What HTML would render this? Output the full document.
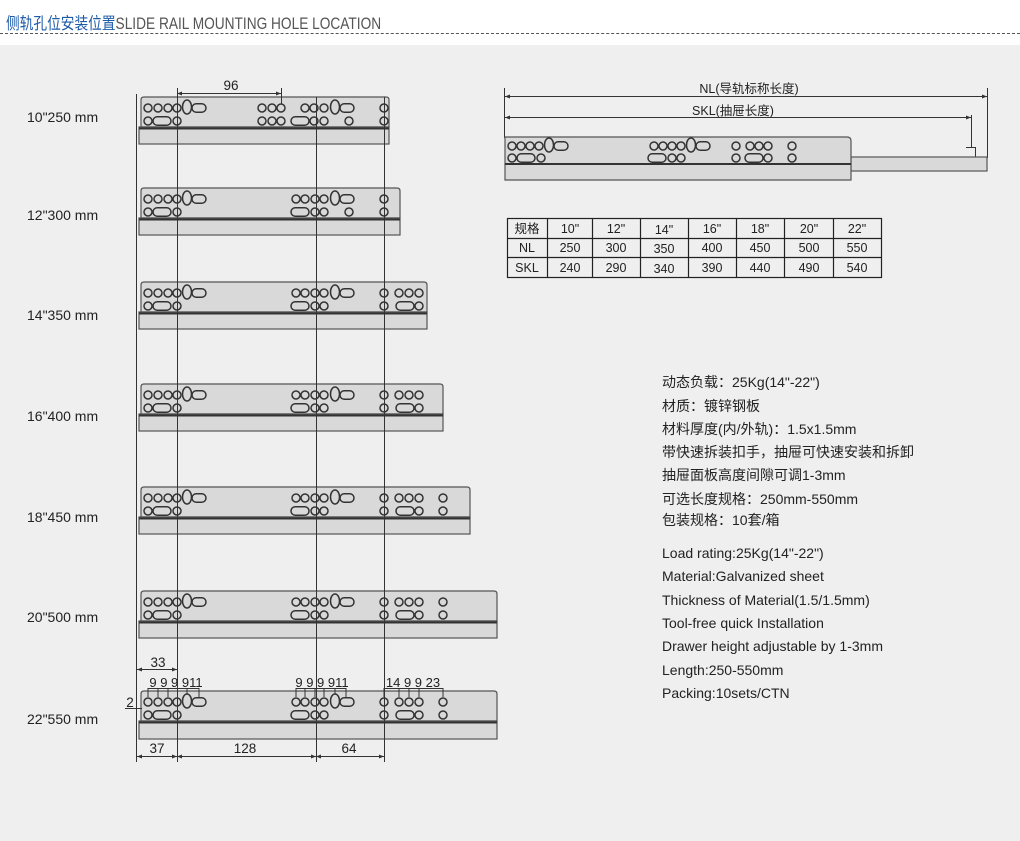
<!DOCTYPE html>
<html><head><meta charset="utf-8"><style>
body{margin:0;width:1020px;height:841px;background:#fff;overflow:hidden;font-family:"Liberation Sans","Noto Sans CJK SC",sans-serif;position:relative;color:#222}
.hd{position:absolute;left:6px;top:10px;font-size:16.5px;white-space:nowrap;transform:scaleX(0.83);transform-origin:0 0}
.hd .cn{color:#1d5aa8}.hd .en{color:#555}
.dash{position:absolute;left:0;top:33px;width:1020px;border-top:1px dashed #555}
.bg{position:absolute;left:0;top:45px;width:1020px;height:796px;background:#eeefee}
.t{position:absolute;white-space:nowrap;font-size:14px;color:#222}
.lb{position:absolute;left:27px;font-size:14px;color:#222;white-space:nowrap}
svg{position:absolute;left:0;top:0}
</style></head><body>
<div class="hd"><span class="cn">侧轨孔位安装位置</span><span class="en">SLIDE RAIL MOUNTING HOLE LOCATION</span></div>
<div class="dash"></div>
<div class="bg"></div>

<div class="lb" style="top:109px">10"250 mm</div>
<div class="lb" style="top:207px">12"300 mm</div>
<div class="lb" style="top:307px">14"350 mm</div>
<div class="lb" style="top:408px">16"400 mm</div>
<div class="lb" style="top:509px">18"450 mm</div>
<div class="lb" style="top:609px">20"500 mm</div>
<div class="lb" style="top:711px">22"550 mm</div>

<svg width="1020" height="841" viewBox="0 0 1020 841" font-family="Liberation Sans, sans-serif">
<defs>
<g id="c"><circle r="4" fill="none" stroke="#333" stroke-width="1.5"/></g>
<g id="tl"><ellipse rx="4.5" ry="7" fill="none" stroke="#333" stroke-width="1.5"/></g>
<g id="ov"><rect x="-7" y="-4.2" width="14" height="8.4" rx="4.2" fill="none" stroke="#333" stroke-width="1.5"/></g>
<g id="ovl"><rect x="-9" y="-4.2" width="18" height="8.4" rx="4.2" fill="none" stroke="#333" stroke-width="1.5"/></g>
<g id="L">
<use href="#c" x="148" y="108"/><use href="#c" x="158" y="108"/><use href="#c" x="168" y="108"/><use href="#c" x="177" y="108"/><use href="#tl" x="187" y="107"/><use href="#ov" x="199" y="108"/>
<use href="#c" x="148" y="121"/><use href="#ovl" x="162" y="121"/><use href="#c" x="177" y="121"/>
</g>
<g id="M">
<use href="#c" x="296" y="108"/><use href="#c" x="305" y="108"/><use href="#c" x="315" y="108"/><use href="#c" x="324" y="108"/><use href="#tl" x="335" y="107"/><use href="#ov" x="347" y="108"/>
<use href="#ovl" x="300" y="121"/><use href="#c" x="315" y="121"/><use href="#c" x="324" y="121"/>
</g>
<g id="R">
<use href="#c" x="384" y="108"/><use href="#c" x="399" y="108"/><use href="#c" x="409" y="108"/><use href="#c" x="419" y="108"/>
<use href="#c" x="384" y="121"/><use href="#ovl" x="405" y="121"/><use href="#c" x="419" y="121"/>
</g>
</defs>

<g fill="#d9d9d9" stroke="#555" stroke-width="1.2">
<g><path d="M141 127V100Q141 97 144 97H386Q389 97 389 100V127Z"/><rect x="139" y="127" width="250" height="17"/><line x1="139" y1="128.5" x2="389" y2="128.5" stroke="#333" stroke-width="2"/></g>
<g transform="translate(0,91)"><path d="M141 127V100Q141 97 144 97H397Q400 97 400 100V127Z"/><rect x="139" y="127" width="261" height="17"/><line x1="139" y1="128.5" x2="400" y2="128.5" stroke="#333" stroke-width="2"/></g>
<g transform="translate(0,185)"><path d="M141 127V100Q141 97 144 97H424Q427 97 427 100V127Z"/><rect x="139" y="127" width="288" height="17"/><line x1="139" y1="128.5" x2="427" y2="128.5" stroke="#333" stroke-width="2"/></g>
<g transform="translate(0,287)"><path d="M141 127V100Q141 97 144 97H440Q443 97 443 100V127Z"/><rect x="139" y="127" width="304" height="17"/><line x1="139" y1="128.5" x2="443" y2="128.5" stroke="#333" stroke-width="2"/></g>
<g transform="translate(0,390)"><path d="M141 127V100Q141 97 144 97H467Q470 97 470 100V127Z"/><rect x="139" y="127" width="331" height="17"/><line x1="139" y1="128.5" x2="470" y2="128.5" stroke="#333" stroke-width="2"/></g>
<g transform="translate(0,494)"><path d="M141 127V100Q141 97 144 97H494Q497 97 497 100V127Z"/><rect x="139" y="127" width="358" height="17"/><line x1="139" y1="128.5" x2="497" y2="128.5" stroke="#333" stroke-width="2"/></g>
<g transform="translate(0,594)"><path d="M141 127V100Q141 97 144 97H494Q497 97 497 100V127Z"/><rect x="139" y="127" width="358" height="18"/><line x1="139" y1="128.5" x2="497" y2="128.5" stroke="#333" stroke-width="2"/></g>
</g>

<g>
<use href="#L"/>
<use href="#c" x="262" y="108"/><use href="#c" x="272" y="108"/><use href="#c" x="281" y="108"/><use href="#c" x="305" y="108"/><use href="#c" x="314" y="108"/><use href="#c" x="324" y="108"/><use href="#tl" x="335" y="107"/><use href="#ov" x="347" y="108"/>
<use href="#c" x="262" y="121"/><use href="#c" x="272" y="121"/><use href="#c" x="281" y="121"/><use href="#ovl" x="300" y="121"/><use href="#c" x="314" y="121"/><use href="#c" x="324" y="121"/><use href="#c" x="349" y="121"/>
<use href="#c" x="384" y="108"/><use href="#c" x="384" y="121"/>
</g>
<g transform="translate(0,91)"><use href="#L"/><use href="#M"/><use href="#c" x="349" y="121"/><use href="#c" x="384" y="108"/><use href="#c" x="384" y="121"/></g>
<g transform="translate(0,185)"><use href="#L"/><use href="#M"/><use href="#R"/></g>
<g transform="translate(0,287)"><use href="#L"/><use href="#M"/><use href="#R"/></g>
<g transform="translate(0,390)"><use href="#L"/><use href="#M"/><use href="#R"/><use href="#c" x="443" y="108"/><use href="#c" x="443" y="121"/></g>
<g transform="translate(0,494)"><use href="#L"/><use href="#M"/><use href="#R"/><use href="#c" x="443" y="108"/><use href="#c" x="443" y="121"/></g>
<g transform="translate(0,594)"><use href="#L"/><use href="#M"/><use href="#R"/><use href="#c" x="443" y="108"/><use href="#c" x="443" y="121"/></g>

<g stroke="#333" stroke-width="1">
<line x1="136.5" y1="94" x2="136.5" y2="762"/>
<line x1="177.5" y1="88" x2="177.5" y2="762"/>
<line x1="316.5" y1="97" x2="316.5" y2="762"/>
<line x1="384.5" y1="97" x2="384.5" y2="762"/>
<line x1="281.5" y1="88" x2="281.5" y2="104"/>
<line x1="177" y1="93.5" x2="281" y2="93.5"/>
<line x1="137" y1="756.5" x2="384" y2="756.5"/>
<line x1="137" y1="669.5" x2="177" y2="669.5"/>
<path d="M148 697V688.5H199V697M158 688V697M168 688V697M187 688V694" fill="none"/>
<path d="M296 697V688.5H346V697M305 688V697M315 688V697M324 688V697M335 688V694" fill="none"/>
<path d="M384 697V688.5H443V697M399 688V697M409 688V697M419 688V697" fill="none"/>
<line x1="125" y1="708.5" x2="142" y2="708.5"/>
</g>
<g fill="#333">
<path d="M177 93.5l5-2v4z"/><path d="M281 93.5l-5-2v4z"/>
<path d="M137 756.5l5-2v4zM177 756.5l-5-2v4zM177 756.5l5-2v4zM316 756.5l-5-2v4zM316 756.5l5-2v4zM384 756.5l-5-2v4z"/>
<path d="M137 669.5l5-2v4zM177 669.5l-5-2v4z"/>
</g>
<g font-size="13.5" fill="#222" text-anchor="middle">
<text x="231" y="90">96</text>
<text x="157" y="753">37</text><text x="245" y="753">128</text><text x="349" y="753">64</text>
<text x="158" y="667">33</text>
<text x="130" y="707">2</text>
<text x="176" y="687" font-size="13">9 9 9 911</text>
<text x="322" y="687" font-size="13">9 9 9 911</text>
<text x="413" y="687" font-size="13">14 9 9  23</text>
</g>

<g stroke="#333" stroke-width="1" fill="none">
<line x1="504.5" y1="88" x2="504.5" y2="138"/>
<line x1="987.5" y1="88" x2="987.5" y2="158"/>
<line x1="971.5" y1="115" x2="971.5" y2="147"/>
<line x1="505" y1="96.5" x2="987" y2="96.5"/>
<line x1="505" y1="117.5" x2="971" y2="117.5"/>
<path d="M966 147.5H975.5V157"/>
</g>
<g fill="#333"><path d="M505 96.5l5-2v4zM987 96.5l-5-2v4zM505 117.5l5-2v4zM971 117.5l-5-2v4z"/></g>
<g font-size="12.5" fill="#222" text-anchor="middle" font-family="Liberation Sans, Noto Sans CJK SC, sans-serif"><text x="749" y="93">NL(导轨标称长度)</text><text x="733" y="115">SKL(抽屉长度)</text></g>
<g fill="#d9d9d9" stroke="#555" stroke-width="1.2">
<rect x="851" y="157" width="136" height="14"/>
<path d="M505 180V137H847Q851 137 851 141V180Z"/>
<line x1="505" y1="164" x2="851" y2="164" stroke="#333" stroke-width="2"/>
</g>
<g transform="translate(0,38)">
<use href="#c" x="512" y="108"/><use href="#c" x="521" y="108"/><use href="#c" x="530" y="108"/><use href="#c" x="539" y="108"/><use href="#tl" x="549" y="107"/><use href="#ov" x="561" y="108"/>
<use href="#c" x="512" y="120"/><use href="#ovl" x="526" y="120"/><use href="#c" x="541" y="120"/>
<use href="#c" x="654" y="108"/><use href="#c" x="663" y="108"/><use href="#c" x="672" y="108"/><use href="#c" x="681" y="108"/><use href="#tl" x="691" y="107"/><use href="#ov" x="703" y="108"/>
<use href="#ovl" x="657" y="120"/><use href="#c" x="672" y="120"/><use href="#c" x="681" y="120"/>
<use href="#c" x="736" y="108"/><use href="#c" x="750" y="108"/><use href="#c" x="759" y="108"/><use href="#c" x="768" y="108"/><use href="#c" x="792" y="108"/>
<use href="#c" x="736" y="120"/><use href="#ovl" x="754" y="120"/><use href="#c" x="768" y="120"/><use href="#c" x="792" y="120"/>
</g>

<g stroke="#222" stroke-width="1.2" fill="none">
<rect x="507.5" y="218.5" width="374" height="59"/>
<line x1="507" y1="238.5" x2="882" y2="238.5"/><line x1="507" y1="257.5" x2="882" y2="257.5"/>
<path d="M547.5 218V278M592.5 218V278M640.5 218V278M688.5 218V278M736.5 218V278M784.5 218V278M833.5 218V278"/>
</g>
<g font-size="12.5" fill="#222" text-anchor="middle" font-family="Liberation Sans, Noto Sans CJK SC, sans-serif">
<text x="527" y="233">规格</text><text x="570" y="233">10"</text><text x="616" y="233">12"</text><text x="664" y="234">14"</text><text x="712" y="233">16"</text><text x="760" y="233">18"</text><text x="809" y="233">20"</text><text x="857" y="233">22"</text>
<text x="527" y="252">NL</text><text x="570" y="252">250</text><text x="616" y="252">300</text><text x="664" y="253">350</text><text x="712" y="252">400</text><text x="760" y="252">450</text><text x="809" y="252">500</text><text x="857" y="252">550</text>
<text x="527" y="272">SKL</text><text x="570" y="272">240</text><text x="616" y="272">290</text><text x="664" y="273">340</text><text x="712" y="272">390</text><text x="760" y="272">440</text><text x="809" y="272">490</text><text x="857" y="272">540</text>
</g>
</svg>

<div class="t" style="left:662px;top:372px">动态负载：25Kg(14"-22")</div>
<div class="t" style="left:662px;top:396px">材质：镀锌钢板</div>
<div class="t" style="left:662px;top:419px">材料厚度(内/外轨)：1.5x1.5mm</div>
<div class="t" style="left:662px;top:442px">带快速拆装扣手，抽屉可快速安装和拆卸</div>
<div class="t" style="left:662px;top:465px">抽屉面板高度间隙可调1-3mm</div>
<div class="t" style="left:662px;top:489px">可选长度规格：250mm-550mm</div>
<div class="t" style="left:662px;top:510px">包装规格：10套/箱</div>
<div class="t" style="left:662px;top:545px">Load rating:25Kg(14"-22")</div>
<div class="t" style="left:662px;top:568px">Material:Galvanized sheet</div>
<div class="t" style="left:662px;top:592px">Thickness of Material(1.5/1.5mm)</div>
<div class="t" style="left:662px;top:615px">Tool-free quick Installation</div>
<div class="t" style="left:662px;top:638px">Drawer height adjustable by 1-3mm</div>
<div class="t" style="left:662px;top:662px">Length:250-550mm</div>
<div class="t" style="left:662px;top:685px">Packing:10sets/CTN</div>
</body></html>
